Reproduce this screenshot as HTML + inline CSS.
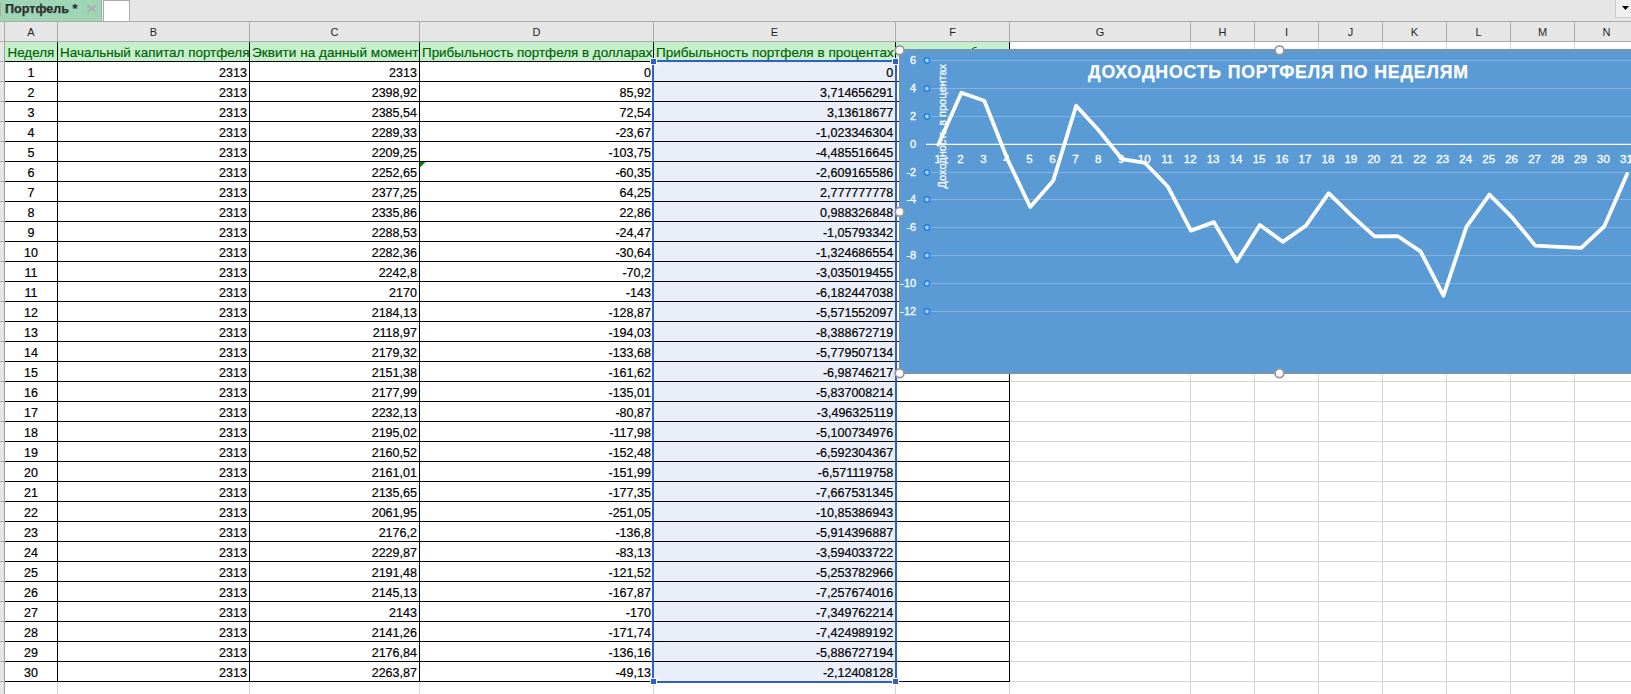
<!DOCTYPE html><html><head><meta charset="utf-8"><style>html,body{margin:0;padding:0;background:#fff;}body{width:1631px;height:694px;overflow:hidden;position:relative;}svg{position:absolute;left:0;top:0;display:block;}text{font-family:"Liberation Sans",sans-serif;}</style></head><body>
<svg width="1631" height="694" viewBox="0 0 1631 694">
<rect x="0" y="0" width="1631" height="21" fill="#e6e6e6" />
<rect x="0" y="21" width="1631" height="1" fill="#ababab" />
<rect x="0" y="0" width="101" height="21" fill="#9dd5b5" />
<rect x="0" y="3" width="1" height="13" fill="#b4a9ab" />
<rect x="101" y="0" width="1" height="21" fill="#ababab" />
<rect x="102" y="0" width="1" height="21" fill="#ececec" />
<rect x="103" y="0" width="27" height="21" fill="#ababab" />
<rect x="104" y="1" width="25" height="20" fill="#ffffff" />
<text x="5" y="12.7" font-size="12" font-weight="bold" fill="#2e2e2e" stroke="#2e2e2e" stroke-width="0.25" textLength="72.5" lengthAdjust="spacingAndGlyphs">Портфель *</text>
<path d="M87.6 5.6 L95.4 11.8 M95.4 5.6 L87.6 11.8" stroke="#adadad" stroke-width="2.1"/>
<rect x="1615" y="0" width="16" height="18" fill="#c8c8c8" />
<rect x="1616" y="0" width="15" height="17" fill="#f0f0f0" />
<path d="M1622 6 L1629 6 L1625.5 10 Z" fill="#000"/>
<rect x="0" y="22" width="1631" height="19" fill="#e6e6e6" />
<rect x="0" y="41" width="1631" height="1" fill="#ababab" />
<rect x="4" y="22" width="1" height="19" fill="#ababab" />
<rect x="57" y="22" width="1" height="19" fill="#ababab" />
<rect x="249" y="22" width="1" height="19" fill="#ababab" />
<rect x="419" y="22" width="1" height="19" fill="#ababab" />
<rect x="653" y="22" width="1" height="19" fill="#ababab" />
<rect x="895" y="22" width="1" height="19" fill="#ababab" />
<rect x="1009" y="22" width="1" height="19" fill="#ababab" />
<rect x="1190" y="22" width="1" height="19" fill="#ababab" />
<rect x="1254" y="22" width="1" height="19" fill="#ababab" />
<rect x="1318" y="22" width="1" height="19" fill="#ababab" />
<rect x="1382" y="22" width="1" height="19" fill="#ababab" />
<rect x="1446" y="22" width="1" height="19" fill="#ababab" />
<rect x="1510" y="22" width="1" height="19" fill="#ababab" />
<rect x="1574" y="22" width="1" height="19" fill="#ababab" />
<rect x="1638" y="22" width="1" height="19" fill="#ababab" />
<text x="31.0" y="36" font-size="11" fill="#262626" text-anchor="middle">A</text>
<text x="153.5" y="36" font-size="11" fill="#262626" text-anchor="middle">B</text>
<text x="334.5" y="36" font-size="11" fill="#262626" text-anchor="middle">C</text>
<text x="536.5" y="36" font-size="11" fill="#262626" text-anchor="middle">D</text>
<text x="774.5" y="36" font-size="11" fill="#262626" text-anchor="middle">E</text>
<text x="952.5" y="36" font-size="11" fill="#262626" text-anchor="middle">F</text>
<text x="1100.0" y="36" font-size="11" fill="#262626" text-anchor="middle">G</text>
<text x="1222.5" y="36" font-size="11" fill="#262626" text-anchor="middle">H</text>
<text x="1286.5" y="36" font-size="11" fill="#262626" text-anchor="middle">I</text>
<text x="1350.5" y="36" font-size="11" fill="#262626" text-anchor="middle">J</text>
<text x="1414.5" y="36" font-size="11" fill="#262626" text-anchor="middle">K</text>
<text x="1478.5" y="36" font-size="11" fill="#262626" text-anchor="middle">L</text>
<text x="1542.5" y="36" font-size="11" fill="#262626" text-anchor="middle">M</text>
<text x="1606.5" y="36" font-size="11" fill="#262626" text-anchor="middle">N</text>
<rect x="0" y="42" width="4" height="652" fill="#e6e6e6" />
<rect x="4" y="42" width="1" height="652" fill="#a0a0a0" />
<rect x="0" y="61" width="4" height="1" fill="#ababab" />
<rect x="0" y="81" width="4" height="1" fill="#ababab" />
<rect x="0" y="101" width="4" height="1" fill="#ababab" />
<rect x="0" y="121" width="4" height="1" fill="#ababab" />
<rect x="0" y="141" width="4" height="1" fill="#ababab" />
<rect x="0" y="161" width="4" height="1" fill="#ababab" />
<rect x="0" y="181" width="4" height="1" fill="#ababab" />
<rect x="0" y="201" width="4" height="1" fill="#ababab" />
<rect x="0" y="221" width="4" height="1" fill="#ababab" />
<rect x="0" y="241" width="4" height="1" fill="#ababab" />
<rect x="0" y="261" width="4" height="1" fill="#ababab" />
<rect x="0" y="281" width="4" height="1" fill="#ababab" />
<rect x="0" y="301" width="4" height="1" fill="#ababab" />
<rect x="0" y="321" width="4" height="1" fill="#ababab" />
<rect x="0" y="341" width="4" height="1" fill="#ababab" />
<rect x="0" y="361" width="4" height="1" fill="#ababab" />
<rect x="0" y="381" width="4" height="1" fill="#ababab" />
<rect x="0" y="401" width="4" height="1" fill="#ababab" />
<rect x="0" y="421" width="4" height="1" fill="#ababab" />
<rect x="0" y="441" width="4" height="1" fill="#ababab" />
<rect x="0" y="461" width="4" height="1" fill="#ababab" />
<rect x="0" y="481" width="4" height="1" fill="#ababab" />
<rect x="0" y="501" width="4" height="1" fill="#ababab" />
<rect x="0" y="521" width="4" height="1" fill="#ababab" />
<rect x="0" y="541" width="4" height="1" fill="#ababab" />
<rect x="0" y="561" width="4" height="1" fill="#ababab" />
<rect x="0" y="581" width="4" height="1" fill="#ababab" />
<rect x="0" y="601" width="4" height="1" fill="#ababab" />
<rect x="0" y="621" width="4" height="1" fill="#ababab" />
<rect x="0" y="641" width="4" height="1" fill="#ababab" />
<rect x="0" y="661" width="4" height="1" fill="#ababab" />
<rect x="0" y="681" width="4" height="1" fill="#ababab" />
<rect x="57" y="42" width="1" height="652" fill="#d4d4d4" />
<rect x="249" y="42" width="1" height="652" fill="#d4d4d4" />
<rect x="419" y="42" width="1" height="652" fill="#d4d4d4" />
<rect x="653" y="42" width="1" height="652" fill="#d4d4d4" />
<rect x="895" y="42" width="1" height="652" fill="#d4d4d4" />
<rect x="1009" y="42" width="1" height="652" fill="#d4d4d4" />
<rect x="1190" y="42" width="1" height="652" fill="#d4d4d4" />
<rect x="1254" y="42" width="1" height="652" fill="#d4d4d4" />
<rect x="1318" y="42" width="1" height="652" fill="#d4d4d4" />
<rect x="1382" y="42" width="1" height="652" fill="#d4d4d4" />
<rect x="1446" y="42" width="1" height="652" fill="#d4d4d4" />
<rect x="1510" y="42" width="1" height="652" fill="#d4d4d4" />
<rect x="1574" y="42" width="1" height="652" fill="#d4d4d4" />
<rect x="1638" y="42" width="1" height="652" fill="#d4d4d4" />
<rect x="5" y="61" width="1631" height="1" fill="#d4d4d4" />
<rect x="5" y="81" width="1631" height="1" fill="#d4d4d4" />
<rect x="5" y="101" width="1631" height="1" fill="#d4d4d4" />
<rect x="5" y="121" width="1631" height="1" fill="#d4d4d4" />
<rect x="5" y="141" width="1631" height="1" fill="#d4d4d4" />
<rect x="5" y="161" width="1631" height="1" fill="#d4d4d4" />
<rect x="5" y="181" width="1631" height="1" fill="#d4d4d4" />
<rect x="5" y="201" width="1631" height="1" fill="#d4d4d4" />
<rect x="5" y="221" width="1631" height="1" fill="#d4d4d4" />
<rect x="5" y="241" width="1631" height="1" fill="#d4d4d4" />
<rect x="5" y="261" width="1631" height="1" fill="#d4d4d4" />
<rect x="5" y="281" width="1631" height="1" fill="#d4d4d4" />
<rect x="5" y="301" width="1631" height="1" fill="#d4d4d4" />
<rect x="5" y="321" width="1631" height="1" fill="#d4d4d4" />
<rect x="5" y="341" width="1631" height="1" fill="#d4d4d4" />
<rect x="5" y="361" width="1631" height="1" fill="#d4d4d4" />
<rect x="5" y="381" width="1631" height="1" fill="#d4d4d4" />
<rect x="5" y="401" width="1631" height="1" fill="#d4d4d4" />
<rect x="5" y="421" width="1631" height="1" fill="#d4d4d4" />
<rect x="5" y="441" width="1631" height="1" fill="#d4d4d4" />
<rect x="5" y="461" width="1631" height="1" fill="#d4d4d4" />
<rect x="5" y="481" width="1631" height="1" fill="#d4d4d4" />
<rect x="5" y="501" width="1631" height="1" fill="#d4d4d4" />
<rect x="5" y="521" width="1631" height="1" fill="#d4d4d4" />
<rect x="5" y="541" width="1631" height="1" fill="#d4d4d4" />
<rect x="5" y="561" width="1631" height="1" fill="#d4d4d4" />
<rect x="5" y="581" width="1631" height="1" fill="#d4d4d4" />
<rect x="5" y="601" width="1631" height="1" fill="#d4d4d4" />
<rect x="5" y="621" width="1631" height="1" fill="#d4d4d4" />
<rect x="5" y="641" width="1631" height="1" fill="#d4d4d4" />
<rect x="5" y="661" width="1631" height="1" fill="#d4d4d4" />
<rect x="5" y="681" width="1631" height="1" fill="#d4d4d4" />
<rect x="5" y="42" width="1004" height="19" fill="#c6efce" />
<rect x="654" y="62" width="241" height="619" fill="#e9eef9" />
<rect x="5" y="61" width="1005" height="1" fill="#000" />
<rect x="5" y="81" width="1005" height="1" fill="#000" />
<rect x="5" y="101" width="1005" height="1" fill="#000" />
<rect x="5" y="121" width="1005" height="1" fill="#000" />
<rect x="5" y="141" width="1005" height="1" fill="#000" />
<rect x="5" y="161" width="1005" height="1" fill="#000" />
<rect x="5" y="181" width="1005" height="1" fill="#000" />
<rect x="5" y="201" width="1005" height="1" fill="#000" />
<rect x="5" y="221" width="1005" height="1" fill="#000" />
<rect x="5" y="241" width="1005" height="1" fill="#000" />
<rect x="5" y="261" width="1005" height="1" fill="#000" />
<rect x="5" y="281" width="1005" height="1" fill="#000" />
<rect x="5" y="301" width="1005" height="1" fill="#000" />
<rect x="5" y="321" width="1005" height="1" fill="#000" />
<rect x="5" y="341" width="1005" height="1" fill="#000" />
<rect x="5" y="361" width="1005" height="1" fill="#000" />
<rect x="5" y="381" width="1005" height="1" fill="#000" />
<rect x="5" y="401" width="1005" height="1" fill="#000" />
<rect x="5" y="421" width="1005" height="1" fill="#000" />
<rect x="5" y="441" width="1005" height="1" fill="#000" />
<rect x="5" y="461" width="1005" height="1" fill="#000" />
<rect x="5" y="481" width="1005" height="1" fill="#000" />
<rect x="5" y="501" width="1005" height="1" fill="#000" />
<rect x="5" y="521" width="1005" height="1" fill="#000" />
<rect x="5" y="541" width="1005" height="1" fill="#000" />
<rect x="5" y="561" width="1005" height="1" fill="#000" />
<rect x="5" y="581" width="1005" height="1" fill="#000" />
<rect x="5" y="601" width="1005" height="1" fill="#000" />
<rect x="5" y="621" width="1005" height="1" fill="#000" />
<rect x="5" y="641" width="1005" height="1" fill="#000" />
<rect x="5" y="661" width="1005" height="1" fill="#000" />
<rect x="5" y="681" width="1005" height="1" fill="#000" />
<rect x="57" y="42" width="1" height="640" fill="#000" />
<rect x="249" y="42" width="1" height="640" fill="#000" />
<rect x="419" y="42" width="1" height="640" fill="#000" />
<rect x="653" y="42" width="1" height="640" fill="#000" />
<rect x="895" y="42" width="1" height="640" fill="#000" />
<rect x="1009" y="42" width="1" height="640" fill="#000" />
<path d="M420 162 L425.5 162 L420 167.5 Z" fill="#008a00"/>
<text x="7.5" y="56.7" font-size="13.5" fill="#006100" stroke="#006100" stroke-width="0.15" textLength="46.8" lengthAdjust="spacingAndGlyphs">Неделя</text>
<text x="60" y="56.7" font-size="13.5" fill="#006100" stroke="#006100" stroke-width="0.15" textLength="189.5" lengthAdjust="spacingAndGlyphs">Начальный капитал портфеля</text>
<text x="252" y="56.7" font-size="13.5" fill="#006100" stroke="#006100" stroke-width="0.15" textLength="166.4" lengthAdjust="spacingAndGlyphs">Эквити на данный момент</text>
<text x="422" y="56.7" font-size="13.5" fill="#006100" stroke="#006100" stroke-width="0.15" textLength="230.5" lengthAdjust="spacingAndGlyphs">Прибыльность портфеля в долларах</text>
<text x="656" y="56.7" font-size="13.5" fill="#006100" stroke="#006100" stroke-width="0.15" textLength="237.7" lengthAdjust="spacingAndGlyphs">Прибыльность портфеля в процентах</text>
<path d="M971.8 49 Q973.5 47.4 976.6 47.4" stroke="#006100" stroke-width="1" fill="none"/>
<text x="31.0" y="77" font-size="12.5" fill="#000" stroke="#000" stroke-width="0.2" text-anchor="middle">1</text>
<text x="246.9" y="77" font-size="12.5" fill="#000" stroke="#000" stroke-width="0.2" text-anchor="end">2313</text>
<text x="416.9" y="77" font-size="12.5" fill="#000" stroke="#000" stroke-width="0.2" text-anchor="end">2313</text>
<text x="650.9" y="77" font-size="12.5" fill="#000" stroke="#000" stroke-width="0.2" text-anchor="end">0</text>
<text x="893.1" y="77" font-size="12.5" fill="#000" stroke="#000" stroke-width="0.2" text-anchor="end">0</text>
<text x="31.0" y="97" font-size="12.5" fill="#000" stroke="#000" stroke-width="0.2" text-anchor="middle">2</text>
<text x="246.9" y="97" font-size="12.5" fill="#000" stroke="#000" stroke-width="0.2" text-anchor="end">2313</text>
<text x="416.9" y="97" font-size="12.5" fill="#000" stroke="#000" stroke-width="0.2" text-anchor="end">2398,92</text>
<text x="650.9" y="97" font-size="12.5" fill="#000" stroke="#000" stroke-width="0.2" text-anchor="end">85,92</text>
<text x="893.1" y="97" font-size="12.5" fill="#000" stroke="#000" stroke-width="0.2" text-anchor="end">3,714656291</text>
<text x="31.0" y="117" font-size="12.5" fill="#000" stroke="#000" stroke-width="0.2" text-anchor="middle">3</text>
<text x="246.9" y="117" font-size="12.5" fill="#000" stroke="#000" stroke-width="0.2" text-anchor="end">2313</text>
<text x="416.9" y="117" font-size="12.5" fill="#000" stroke="#000" stroke-width="0.2" text-anchor="end">2385,54</text>
<text x="650.9" y="117" font-size="12.5" fill="#000" stroke="#000" stroke-width="0.2" text-anchor="end">72,54</text>
<text x="893.1" y="117" font-size="12.5" fill="#000" stroke="#000" stroke-width="0.2" text-anchor="end">3,13618677</text>
<text x="31.0" y="137" font-size="12.5" fill="#000" stroke="#000" stroke-width="0.2" text-anchor="middle">4</text>
<text x="246.9" y="137" font-size="12.5" fill="#000" stroke="#000" stroke-width="0.2" text-anchor="end">2313</text>
<text x="416.9" y="137" font-size="12.5" fill="#000" stroke="#000" stroke-width="0.2" text-anchor="end">2289,33</text>
<text x="650.9" y="137" font-size="12.5" fill="#000" stroke="#000" stroke-width="0.2" text-anchor="end">-23,67</text>
<text x="893.1" y="137" font-size="12.5" fill="#000" stroke="#000" stroke-width="0.2" text-anchor="end">-1,023346304</text>
<text x="31.0" y="157" font-size="12.5" fill="#000" stroke="#000" stroke-width="0.2" text-anchor="middle">5</text>
<text x="246.9" y="157" font-size="12.5" fill="#000" stroke="#000" stroke-width="0.2" text-anchor="end">2313</text>
<text x="416.9" y="157" font-size="12.5" fill="#000" stroke="#000" stroke-width="0.2" text-anchor="end">2209,25</text>
<text x="650.9" y="157" font-size="12.5" fill="#000" stroke="#000" stroke-width="0.2" text-anchor="end">-103,75</text>
<text x="893.1" y="157" font-size="12.5" fill="#000" stroke="#000" stroke-width="0.2" text-anchor="end">-4,485516645</text>
<text x="31.0" y="177" font-size="12.5" fill="#000" stroke="#000" stroke-width="0.2" text-anchor="middle">6</text>
<text x="246.9" y="177" font-size="12.5" fill="#000" stroke="#000" stroke-width="0.2" text-anchor="end">2313</text>
<text x="416.9" y="177" font-size="12.5" fill="#000" stroke="#000" stroke-width="0.2" text-anchor="end">2252,65</text>
<text x="650.9" y="177" font-size="12.5" fill="#000" stroke="#000" stroke-width="0.2" text-anchor="end">-60,35</text>
<text x="893.1" y="177" font-size="12.5" fill="#000" stroke="#000" stroke-width="0.2" text-anchor="end">-2,609165586</text>
<text x="31.0" y="197" font-size="12.5" fill="#000" stroke="#000" stroke-width="0.2" text-anchor="middle">7</text>
<text x="246.9" y="197" font-size="12.5" fill="#000" stroke="#000" stroke-width="0.2" text-anchor="end">2313</text>
<text x="416.9" y="197" font-size="12.5" fill="#000" stroke="#000" stroke-width="0.2" text-anchor="end">2377,25</text>
<text x="650.9" y="197" font-size="12.5" fill="#000" stroke="#000" stroke-width="0.2" text-anchor="end">64,25</text>
<text x="893.1" y="197" font-size="12.5" fill="#000" stroke="#000" stroke-width="0.2" text-anchor="end">2,777777778</text>
<text x="31.0" y="217" font-size="12.5" fill="#000" stroke="#000" stroke-width="0.2" text-anchor="middle">8</text>
<text x="246.9" y="217" font-size="12.5" fill="#000" stroke="#000" stroke-width="0.2" text-anchor="end">2313</text>
<text x="416.9" y="217" font-size="12.5" fill="#000" stroke="#000" stroke-width="0.2" text-anchor="end">2335,86</text>
<text x="650.9" y="217" font-size="12.5" fill="#000" stroke="#000" stroke-width="0.2" text-anchor="end">22,86</text>
<text x="893.1" y="217" font-size="12.5" fill="#000" stroke="#000" stroke-width="0.2" text-anchor="end">0,988326848</text>
<text x="31.0" y="237" font-size="12.5" fill="#000" stroke="#000" stroke-width="0.2" text-anchor="middle">9</text>
<text x="246.9" y="237" font-size="12.5" fill="#000" stroke="#000" stroke-width="0.2" text-anchor="end">2313</text>
<text x="416.9" y="237" font-size="12.5" fill="#000" stroke="#000" stroke-width="0.2" text-anchor="end">2288,53</text>
<text x="650.9" y="237" font-size="12.5" fill="#000" stroke="#000" stroke-width="0.2" text-anchor="end">-24,47</text>
<text x="893.1" y="237" font-size="12.5" fill="#000" stroke="#000" stroke-width="0.2" text-anchor="end">-1,05793342</text>
<text x="31.0" y="257" font-size="12.5" fill="#000" stroke="#000" stroke-width="0.2" text-anchor="middle">10</text>
<text x="246.9" y="257" font-size="12.5" fill="#000" stroke="#000" stroke-width="0.2" text-anchor="end">2313</text>
<text x="416.9" y="257" font-size="12.5" fill="#000" stroke="#000" stroke-width="0.2" text-anchor="end">2282,36</text>
<text x="650.9" y="257" font-size="12.5" fill="#000" stroke="#000" stroke-width="0.2" text-anchor="end">-30,64</text>
<text x="893.1" y="257" font-size="12.5" fill="#000" stroke="#000" stroke-width="0.2" text-anchor="end">-1,324686554</text>
<text x="31.0" y="277" font-size="12.5" fill="#000" stroke="#000" stroke-width="0.2" text-anchor="middle">11</text>
<text x="246.9" y="277" font-size="12.5" fill="#000" stroke="#000" stroke-width="0.2" text-anchor="end">2313</text>
<text x="416.9" y="277" font-size="12.5" fill="#000" stroke="#000" stroke-width="0.2" text-anchor="end">2242,8</text>
<text x="650.9" y="277" font-size="12.5" fill="#000" stroke="#000" stroke-width="0.2" text-anchor="end">-70,2</text>
<text x="893.1" y="277" font-size="12.5" fill="#000" stroke="#000" stroke-width="0.2" text-anchor="end">-3,035019455</text>
<text x="31.0" y="297" font-size="12.5" fill="#000" stroke="#000" stroke-width="0.2" text-anchor="middle">11</text>
<text x="246.9" y="297" font-size="12.5" fill="#000" stroke="#000" stroke-width="0.2" text-anchor="end">2313</text>
<text x="416.9" y="297" font-size="12.5" fill="#000" stroke="#000" stroke-width="0.2" text-anchor="end">2170</text>
<text x="650.9" y="297" font-size="12.5" fill="#000" stroke="#000" stroke-width="0.2" text-anchor="end">-143</text>
<text x="893.1" y="297" font-size="12.5" fill="#000" stroke="#000" stroke-width="0.2" text-anchor="end">-6,182447038</text>
<text x="31.0" y="317" font-size="12.5" fill="#000" stroke="#000" stroke-width="0.2" text-anchor="middle">12</text>
<text x="246.9" y="317" font-size="12.5" fill="#000" stroke="#000" stroke-width="0.2" text-anchor="end">2313</text>
<text x="416.9" y="317" font-size="12.5" fill="#000" stroke="#000" stroke-width="0.2" text-anchor="end">2184,13</text>
<text x="650.9" y="317" font-size="12.5" fill="#000" stroke="#000" stroke-width="0.2" text-anchor="end">-128,87</text>
<text x="893.1" y="317" font-size="12.5" fill="#000" stroke="#000" stroke-width="0.2" text-anchor="end">-5,571552097</text>
<text x="31.0" y="337" font-size="12.5" fill="#000" stroke="#000" stroke-width="0.2" text-anchor="middle">13</text>
<text x="246.9" y="337" font-size="12.5" fill="#000" stroke="#000" stroke-width="0.2" text-anchor="end">2313</text>
<text x="416.9" y="337" font-size="12.5" fill="#000" stroke="#000" stroke-width="0.2" text-anchor="end">2118,97</text>
<text x="650.9" y="337" font-size="12.5" fill="#000" stroke="#000" stroke-width="0.2" text-anchor="end">-194,03</text>
<text x="893.1" y="337" font-size="12.5" fill="#000" stroke="#000" stroke-width="0.2" text-anchor="end">-8,388672719</text>
<text x="31.0" y="357" font-size="12.5" fill="#000" stroke="#000" stroke-width="0.2" text-anchor="middle">14</text>
<text x="246.9" y="357" font-size="12.5" fill="#000" stroke="#000" stroke-width="0.2" text-anchor="end">2313</text>
<text x="416.9" y="357" font-size="12.5" fill="#000" stroke="#000" stroke-width="0.2" text-anchor="end">2179,32</text>
<text x="650.9" y="357" font-size="12.5" fill="#000" stroke="#000" stroke-width="0.2" text-anchor="end">-133,68</text>
<text x="893.1" y="357" font-size="12.5" fill="#000" stroke="#000" stroke-width="0.2" text-anchor="end">-5,779507134</text>
<text x="31.0" y="377" font-size="12.5" fill="#000" stroke="#000" stroke-width="0.2" text-anchor="middle">15</text>
<text x="246.9" y="377" font-size="12.5" fill="#000" stroke="#000" stroke-width="0.2" text-anchor="end">2313</text>
<text x="416.9" y="377" font-size="12.5" fill="#000" stroke="#000" stroke-width="0.2" text-anchor="end">2151,38</text>
<text x="650.9" y="377" font-size="12.5" fill="#000" stroke="#000" stroke-width="0.2" text-anchor="end">-161,62</text>
<text x="893.1" y="377" font-size="12.5" fill="#000" stroke="#000" stroke-width="0.2" text-anchor="end">-6,98746217</text>
<text x="31.0" y="397" font-size="12.5" fill="#000" stroke="#000" stroke-width="0.2" text-anchor="middle">16</text>
<text x="246.9" y="397" font-size="12.5" fill="#000" stroke="#000" stroke-width="0.2" text-anchor="end">2313</text>
<text x="416.9" y="397" font-size="12.5" fill="#000" stroke="#000" stroke-width="0.2" text-anchor="end">2177,99</text>
<text x="650.9" y="397" font-size="12.5" fill="#000" stroke="#000" stroke-width="0.2" text-anchor="end">-135,01</text>
<text x="893.1" y="397" font-size="12.5" fill="#000" stroke="#000" stroke-width="0.2" text-anchor="end">-5,837008214</text>
<text x="31.0" y="417" font-size="12.5" fill="#000" stroke="#000" stroke-width="0.2" text-anchor="middle">17</text>
<text x="246.9" y="417" font-size="12.5" fill="#000" stroke="#000" stroke-width="0.2" text-anchor="end">2313</text>
<text x="416.9" y="417" font-size="12.5" fill="#000" stroke="#000" stroke-width="0.2" text-anchor="end">2232,13</text>
<text x="650.9" y="417" font-size="12.5" fill="#000" stroke="#000" stroke-width="0.2" text-anchor="end">-80,87</text>
<text x="893.1" y="417" font-size="12.5" fill="#000" stroke="#000" stroke-width="0.2" text-anchor="end">-3,496325119</text>
<text x="31.0" y="437" font-size="12.5" fill="#000" stroke="#000" stroke-width="0.2" text-anchor="middle">18</text>
<text x="246.9" y="437" font-size="12.5" fill="#000" stroke="#000" stroke-width="0.2" text-anchor="end">2313</text>
<text x="416.9" y="437" font-size="12.5" fill="#000" stroke="#000" stroke-width="0.2" text-anchor="end">2195,02</text>
<text x="650.9" y="437" font-size="12.5" fill="#000" stroke="#000" stroke-width="0.2" text-anchor="end">-117,98</text>
<text x="893.1" y="437" font-size="12.5" fill="#000" stroke="#000" stroke-width="0.2" text-anchor="end">-5,100734976</text>
<text x="31.0" y="457" font-size="12.5" fill="#000" stroke="#000" stroke-width="0.2" text-anchor="middle">19</text>
<text x="246.9" y="457" font-size="12.5" fill="#000" stroke="#000" stroke-width="0.2" text-anchor="end">2313</text>
<text x="416.9" y="457" font-size="12.5" fill="#000" stroke="#000" stroke-width="0.2" text-anchor="end">2160,52</text>
<text x="650.9" y="457" font-size="12.5" fill="#000" stroke="#000" stroke-width="0.2" text-anchor="end">-152,48</text>
<text x="893.1" y="457" font-size="12.5" fill="#000" stroke="#000" stroke-width="0.2" text-anchor="end">-6,592304367</text>
<text x="31.0" y="477" font-size="12.5" fill="#000" stroke="#000" stroke-width="0.2" text-anchor="middle">20</text>
<text x="246.9" y="477" font-size="12.5" fill="#000" stroke="#000" stroke-width="0.2" text-anchor="end">2313</text>
<text x="416.9" y="477" font-size="12.5" fill="#000" stroke="#000" stroke-width="0.2" text-anchor="end">2161,01</text>
<text x="650.9" y="477" font-size="12.5" fill="#000" stroke="#000" stroke-width="0.2" text-anchor="end">-151,99</text>
<text x="893.1" y="477" font-size="12.5" fill="#000" stroke="#000" stroke-width="0.2" text-anchor="end">-6,571119758</text>
<text x="31.0" y="497" font-size="12.5" fill="#000" stroke="#000" stroke-width="0.2" text-anchor="middle">21</text>
<text x="246.9" y="497" font-size="12.5" fill="#000" stroke="#000" stroke-width="0.2" text-anchor="end">2313</text>
<text x="416.9" y="497" font-size="12.5" fill="#000" stroke="#000" stroke-width="0.2" text-anchor="end">2135,65</text>
<text x="650.9" y="497" font-size="12.5" fill="#000" stroke="#000" stroke-width="0.2" text-anchor="end">-177,35</text>
<text x="893.1" y="497" font-size="12.5" fill="#000" stroke="#000" stroke-width="0.2" text-anchor="end">-7,667531345</text>
<text x="31.0" y="517" font-size="12.5" fill="#000" stroke="#000" stroke-width="0.2" text-anchor="middle">22</text>
<text x="246.9" y="517" font-size="12.5" fill="#000" stroke="#000" stroke-width="0.2" text-anchor="end">2313</text>
<text x="416.9" y="517" font-size="12.5" fill="#000" stroke="#000" stroke-width="0.2" text-anchor="end">2061,95</text>
<text x="650.9" y="517" font-size="12.5" fill="#000" stroke="#000" stroke-width="0.2" text-anchor="end">-251,05</text>
<text x="893.1" y="517" font-size="12.5" fill="#000" stroke="#000" stroke-width="0.2" text-anchor="end">-10,85386943</text>
<text x="31.0" y="537" font-size="12.5" fill="#000" stroke="#000" stroke-width="0.2" text-anchor="middle">23</text>
<text x="246.9" y="537" font-size="12.5" fill="#000" stroke="#000" stroke-width="0.2" text-anchor="end">2313</text>
<text x="416.9" y="537" font-size="12.5" fill="#000" stroke="#000" stroke-width="0.2" text-anchor="end">2176,2</text>
<text x="650.9" y="537" font-size="12.5" fill="#000" stroke="#000" stroke-width="0.2" text-anchor="end">-136,8</text>
<text x="893.1" y="537" font-size="12.5" fill="#000" stroke="#000" stroke-width="0.2" text-anchor="end">-5,914396887</text>
<text x="31.0" y="557" font-size="12.5" fill="#000" stroke="#000" stroke-width="0.2" text-anchor="middle">24</text>
<text x="246.9" y="557" font-size="12.5" fill="#000" stroke="#000" stroke-width="0.2" text-anchor="end">2313</text>
<text x="416.9" y="557" font-size="12.5" fill="#000" stroke="#000" stroke-width="0.2" text-anchor="end">2229,87</text>
<text x="650.9" y="557" font-size="12.5" fill="#000" stroke="#000" stroke-width="0.2" text-anchor="end">-83,13</text>
<text x="893.1" y="557" font-size="12.5" fill="#000" stroke="#000" stroke-width="0.2" text-anchor="end">-3,594033722</text>
<text x="31.0" y="577" font-size="12.5" fill="#000" stroke="#000" stroke-width="0.2" text-anchor="middle">25</text>
<text x="246.9" y="577" font-size="12.5" fill="#000" stroke="#000" stroke-width="0.2" text-anchor="end">2313</text>
<text x="416.9" y="577" font-size="12.5" fill="#000" stroke="#000" stroke-width="0.2" text-anchor="end">2191,48</text>
<text x="650.9" y="577" font-size="12.5" fill="#000" stroke="#000" stroke-width="0.2" text-anchor="end">-121,52</text>
<text x="893.1" y="577" font-size="12.5" fill="#000" stroke="#000" stroke-width="0.2" text-anchor="end">-5,253782966</text>
<text x="31.0" y="597" font-size="12.5" fill="#000" stroke="#000" stroke-width="0.2" text-anchor="middle">26</text>
<text x="246.9" y="597" font-size="12.5" fill="#000" stroke="#000" stroke-width="0.2" text-anchor="end">2313</text>
<text x="416.9" y="597" font-size="12.5" fill="#000" stroke="#000" stroke-width="0.2" text-anchor="end">2145,13</text>
<text x="650.9" y="597" font-size="12.5" fill="#000" stroke="#000" stroke-width="0.2" text-anchor="end">-167,87</text>
<text x="893.1" y="597" font-size="12.5" fill="#000" stroke="#000" stroke-width="0.2" text-anchor="end">-7,257674016</text>
<text x="31.0" y="617" font-size="12.5" fill="#000" stroke="#000" stroke-width="0.2" text-anchor="middle">27</text>
<text x="246.9" y="617" font-size="12.5" fill="#000" stroke="#000" stroke-width="0.2" text-anchor="end">2313</text>
<text x="416.9" y="617" font-size="12.5" fill="#000" stroke="#000" stroke-width="0.2" text-anchor="end">2143</text>
<text x="650.9" y="617" font-size="12.5" fill="#000" stroke="#000" stroke-width="0.2" text-anchor="end">-170</text>
<text x="893.1" y="617" font-size="12.5" fill="#000" stroke="#000" stroke-width="0.2" text-anchor="end">-7,349762214</text>
<text x="31.0" y="637" font-size="12.5" fill="#000" stroke="#000" stroke-width="0.2" text-anchor="middle">28</text>
<text x="246.9" y="637" font-size="12.5" fill="#000" stroke="#000" stroke-width="0.2" text-anchor="end">2313</text>
<text x="416.9" y="637" font-size="12.5" fill="#000" stroke="#000" stroke-width="0.2" text-anchor="end">2141,26</text>
<text x="650.9" y="637" font-size="12.5" fill="#000" stroke="#000" stroke-width="0.2" text-anchor="end">-171,74</text>
<text x="893.1" y="637" font-size="12.5" fill="#000" stroke="#000" stroke-width="0.2" text-anchor="end">-7,424989192</text>
<text x="31.0" y="657" font-size="12.5" fill="#000" stroke="#000" stroke-width="0.2" text-anchor="middle">29</text>
<text x="246.9" y="657" font-size="12.5" fill="#000" stroke="#000" stroke-width="0.2" text-anchor="end">2313</text>
<text x="416.9" y="657" font-size="12.5" fill="#000" stroke="#000" stroke-width="0.2" text-anchor="end">2176,84</text>
<text x="650.9" y="657" font-size="12.5" fill="#000" stroke="#000" stroke-width="0.2" text-anchor="end">-136,16</text>
<text x="893.1" y="657" font-size="12.5" fill="#000" stroke="#000" stroke-width="0.2" text-anchor="end">-5,886727194</text>
<text x="31.0" y="677" font-size="12.5" fill="#000" stroke="#000" stroke-width="0.2" text-anchor="middle">30</text>
<text x="246.9" y="677" font-size="12.5" fill="#000" stroke="#000" stroke-width="0.2" text-anchor="end">2313</text>
<text x="416.9" y="677" font-size="12.5" fill="#000" stroke="#000" stroke-width="0.2" text-anchor="end">2263,87</text>
<text x="650.9" y="677" font-size="12.5" fill="#000" stroke="#000" stroke-width="0.2" text-anchor="end">-49,13</text>
<text x="893.1" y="677" font-size="12.5" fill="#000" stroke="#000" stroke-width="0.2" text-anchor="end">-2,12408128</text>
<rect x="654" y="60" width="241" height="2" fill="#2f5fcf" />
<rect x="654" y="681" width="242" height="2" fill="#2f5fcf" />
<rect x="652" y="62" width="2" height="619" fill="#2f5fcf" />
<rect x="895" y="62" width="2" height="619" fill="#2f5fcf" />
<rect x="650" y="58" width="7" height="7" fill="#ffffff" />
<rect x="651" y="59" width="5" height="5" fill="#2f5fcf" />
<rect x="892" y="58" width="7" height="7" fill="#ffffff" />
<rect x="893" y="59" width="5" height="5" fill="#2f5fcf" />
<rect x="650" y="678" width="7" height="7" fill="#ffffff" />
<rect x="651" y="679" width="5" height="5" fill="#2f5fcf" />
<rect x="892" y="678" width="7" height="7" fill="#ffffff" />
<rect x="893" y="679" width="5" height="5" fill="#2f5fcf" />
<rect x="899" y="49" width="732" height="325" fill="#5b9bd5" />
<rect x="899" y="50" width="732" height="1" fill="#8f8f8f" />
<rect x="899" y="50" width="1" height="324" fill="#8f8f8f" />
<rect x="899" y="373" width="732" height="1" fill="#8f8f8f" />
<rect x="930" y="60" width="701" height="1" fill="#84b3e0"/>
<rect x="930" y="88" width="701" height="1" fill="#84b3e0"/>
<rect x="930" y="116" width="701" height="1" fill="#84b3e0"/>
<rect x="930" y="172" width="701" height="1" fill="#84b3e0"/>
<rect x="930" y="199" width="701" height="1" fill="#84b3e0"/>
<rect x="930" y="227" width="701" height="1" fill="#84b3e0"/>
<rect x="930" y="255" width="701" height="1" fill="#84b3e0"/>
<rect x="930" y="283" width="701" height="1" fill="#84b3e0"/>
<rect x="930" y="311" width="701" height="1" fill="#84b3e0"/>
<rect x="926" y="144" width="705" height="1" fill="#ffffff"/>
<rect x="926" y="143" width="705" height="2" fill="#ffffff" opacity="0.25"/>
<circle cx="927" cy="60.50" r="2.7" fill="#b3d1f0" stroke="#1f80e6" stroke-width="1.6"/>
<circle cx="927" cy="88.50" r="2.7" fill="#b3d1f0" stroke="#1f80e6" stroke-width="1.6"/>
<circle cx="927" cy="116.50" r="2.7" fill="#b3d1f0" stroke="#1f80e6" stroke-width="1.6"/>
<circle cx="927" cy="172.50" r="2.7" fill="#b3d1f0" stroke="#1f80e6" stroke-width="1.6"/>
<circle cx="927" cy="199.50" r="2.7" fill="#b3d1f0" stroke="#1f80e6" stroke-width="1.6"/>
<circle cx="927" cy="227.50" r="2.7" fill="#b3d1f0" stroke="#1f80e6" stroke-width="1.6"/>
<circle cx="927" cy="255.50" r="2.7" fill="#b3d1f0" stroke="#1f80e6" stroke-width="1.6"/>
<circle cx="927" cy="283.50" r="2.7" fill="#b3d1f0" stroke="#1f80e6" stroke-width="1.6"/>
<circle cx="927" cy="311.50" r="2.7" fill="#b3d1f0" stroke="#1f80e6" stroke-width="1.6"/>
<text x="916.2" y="63.60" font-size="11" fill="#ffffff" stroke="#ffffff" stroke-width="0.3" text-anchor="end">6</text>
<text x="916.2" y="91.60" font-size="11" fill="#ffffff" stroke="#ffffff" stroke-width="0.3" text-anchor="end">4</text>
<text x="916.2" y="119.60" font-size="11" fill="#ffffff" stroke="#ffffff" stroke-width="0.3" text-anchor="end">2</text>
<text x="916.2" y="147.60" font-size="11" fill="#ffffff" stroke="#ffffff" stroke-width="0.3" text-anchor="end">0</text>
<text x="916.2" y="175.60" font-size="11" fill="#ffffff" stroke="#ffffff" stroke-width="0.3" text-anchor="end">-2</text>
<text x="916.2" y="202.60" font-size="11" fill="#ffffff" stroke="#ffffff" stroke-width="0.3" text-anchor="end">-4</text>
<text x="916.2" y="230.60" font-size="11" fill="#ffffff" stroke="#ffffff" stroke-width="0.3" text-anchor="end">-6</text>
<text x="916.2" y="258.60" font-size="11" fill="#ffffff" stroke="#ffffff" stroke-width="0.3" text-anchor="end">-8</text>
<text x="916.2" y="286.60" font-size="11" fill="#ffffff" stroke="#ffffff" stroke-width="0.3" text-anchor="end">-10</text>
<text x="916.2" y="314.60" font-size="11" fill="#ffffff" stroke="#ffffff" stroke-width="0.3" text-anchor="end">-12</text>
<text x="937.6" y="162.9" font-size="11.5" fill="#ffffff" stroke="#ffffff" stroke-width="0.3" text-anchor="middle">1</text>
<text x="960.5600000000001" y="162.9" font-size="11.5" fill="#ffffff" stroke="#ffffff" stroke-width="0.3" text-anchor="middle">2</text>
<text x="983.52" y="162.9" font-size="11.5" fill="#ffffff" stroke="#ffffff" stroke-width="0.3" text-anchor="middle">3</text>
<text x="1006.48" y="162.9" font-size="11.5" fill="#ffffff" stroke="#ffffff" stroke-width="0.3" text-anchor="middle">4</text>
<text x="1029.44" y="162.9" font-size="11.5" fill="#ffffff" stroke="#ffffff" stroke-width="0.3" text-anchor="middle">5</text>
<text x="1052.4" y="162.9" font-size="11.5" fill="#ffffff" stroke="#ffffff" stroke-width="0.3" text-anchor="middle">6</text>
<text x="1075.3600000000001" y="162.9" font-size="11.5" fill="#ffffff" stroke="#ffffff" stroke-width="0.3" text-anchor="middle">7</text>
<text x="1098.32" y="162.9" font-size="11.5" fill="#ffffff" stroke="#ffffff" stroke-width="0.3" text-anchor="middle">8</text>
<text x="1121.28" y="162.9" font-size="11.5" fill="#ffffff" stroke="#ffffff" stroke-width="0.3" text-anchor="middle">9</text>
<text x="1144.24" y="162.9" font-size="11.5" fill="#ffffff" stroke="#ffffff" stroke-width="0.3" text-anchor="middle">10</text>
<text x="1167.2" y="162.9" font-size="11.5" fill="#ffffff" stroke="#ffffff" stroke-width="0.3" text-anchor="middle">11</text>
<text x="1190.16" y="162.9" font-size="11.5" fill="#ffffff" stroke="#ffffff" stroke-width="0.3" text-anchor="middle">12</text>
<text x="1213.12" y="162.9" font-size="11.5" fill="#ffffff" stroke="#ffffff" stroke-width="0.3" text-anchor="middle">13</text>
<text x="1236.08" y="162.9" font-size="11.5" fill="#ffffff" stroke="#ffffff" stroke-width="0.3" text-anchor="middle">14</text>
<text x="1259.04" y="162.9" font-size="11.5" fill="#ffffff" stroke="#ffffff" stroke-width="0.3" text-anchor="middle">15</text>
<text x="1282.0" y="162.9" font-size="11.5" fill="#ffffff" stroke="#ffffff" stroke-width="0.3" text-anchor="middle">16</text>
<text x="1304.96" y="162.9" font-size="11.5" fill="#ffffff" stroke="#ffffff" stroke-width="0.3" text-anchor="middle">17</text>
<text x="1327.92" y="162.9" font-size="11.5" fill="#ffffff" stroke="#ffffff" stroke-width="0.3" text-anchor="middle">18</text>
<text x="1350.88" y="162.9" font-size="11.5" fill="#ffffff" stroke="#ffffff" stroke-width="0.3" text-anchor="middle">19</text>
<text x="1373.8400000000001" y="162.9" font-size="11.5" fill="#ffffff" stroke="#ffffff" stroke-width="0.3" text-anchor="middle">20</text>
<text x="1396.8000000000002" y="162.9" font-size="11.5" fill="#ffffff" stroke="#ffffff" stroke-width="0.3" text-anchor="middle">21</text>
<text x="1419.76" y="162.9" font-size="11.5" fill="#ffffff" stroke="#ffffff" stroke-width="0.3" text-anchor="middle">22</text>
<text x="1442.72" y="162.9" font-size="11.5" fill="#ffffff" stroke="#ffffff" stroke-width="0.3" text-anchor="middle">23</text>
<text x="1465.68" y="162.9" font-size="11.5" fill="#ffffff" stroke="#ffffff" stroke-width="0.3" text-anchor="middle">24</text>
<text x="1488.6399999999999" y="162.9" font-size="11.5" fill="#ffffff" stroke="#ffffff" stroke-width="0.3" text-anchor="middle">25</text>
<text x="1511.6" y="162.9" font-size="11.5" fill="#ffffff" stroke="#ffffff" stroke-width="0.3" text-anchor="middle">26</text>
<text x="1534.56" y="162.9" font-size="11.5" fill="#ffffff" stroke="#ffffff" stroke-width="0.3" text-anchor="middle">27</text>
<text x="1557.52" y="162.9" font-size="11.5" fill="#ffffff" stroke="#ffffff" stroke-width="0.3" text-anchor="middle">28</text>
<text x="1580.48" y="162.9" font-size="11.5" fill="#ffffff" stroke="#ffffff" stroke-width="0.3" text-anchor="middle">29</text>
<text x="1603.44" y="162.9" font-size="11.5" fill="#ffffff" stroke="#ffffff" stroke-width="0.3" text-anchor="middle">30</text>
<text x="1626.4" y="162.9" font-size="11.5" fill="#ffffff" stroke="#ffffff" stroke-width="0.3" text-anchor="middle">31</text>
<text x="1278" y="77.8" font-size="17.7" font-weight="bold" fill="#ffffff" stroke="#ffffff" stroke-width="0.25" text-anchor="middle" textLength="380" lengthAdjust="spacing">ДОХОДНОСТЬ ПОРТФЕЛЯ ПО НЕДЕЛЯМ</text>
<polyline points="938.40,144.50 961.36,92.75 984.32,100.81 1007.27,158.76 1030.23,206.98 1053.19,180.85 1076.15,105.81 1099.11,130.73 1122.06,159.24 1145.02,162.95 1167.98,186.78 1190.94,230.62 1213.90,222.11 1236.85,261.35 1259.81,225.01 1282.77,241.84 1305.73,225.81 1328.69,193.20 1351.64,215.55 1374.60,236.33 1397.56,236.04 1420.52,251.31 1443.48,295.69 1466.43,226.89 1489.39,194.56 1512.35,217.69 1535.31,245.60 1558.27,246.88 1581.22,247.93 1604.18,226.50 1627.14,174.09" fill="none" stroke="#ffffff" stroke-width="3.8" stroke-linejoin="round" stroke-linecap="round"/>
<text transform="translate(945.8,126.2) rotate(-90)" x="0" y="0" font-size="11.5" fill="#ffffff" stroke="#ffffff" stroke-width="0.25" text-anchor="middle" textLength="124.5" lengthAdjust="spacingAndGlyphs">Доходность в процентах</text>
<circle cx="899.6" cy="50.3" r="4.4" fill="#ffffff" stroke="#999999" stroke-width="1.8"/>
<circle cx="1279.5" cy="50.3" r="4.4" fill="#ffffff" stroke="#999999" stroke-width="1.8"/>
<circle cx="899.6" cy="211.7" r="4.4" fill="#ffffff" stroke="#999999" stroke-width="1.8"/>
<circle cx="899.6" cy="373.3" r="4.4" fill="#ffffff" stroke="#999999" stroke-width="1.8"/>
<circle cx="1279.5" cy="373.3" r="4.4" fill="#ffffff" stroke="#999999" stroke-width="1.8"/>
</svg></body></html>
